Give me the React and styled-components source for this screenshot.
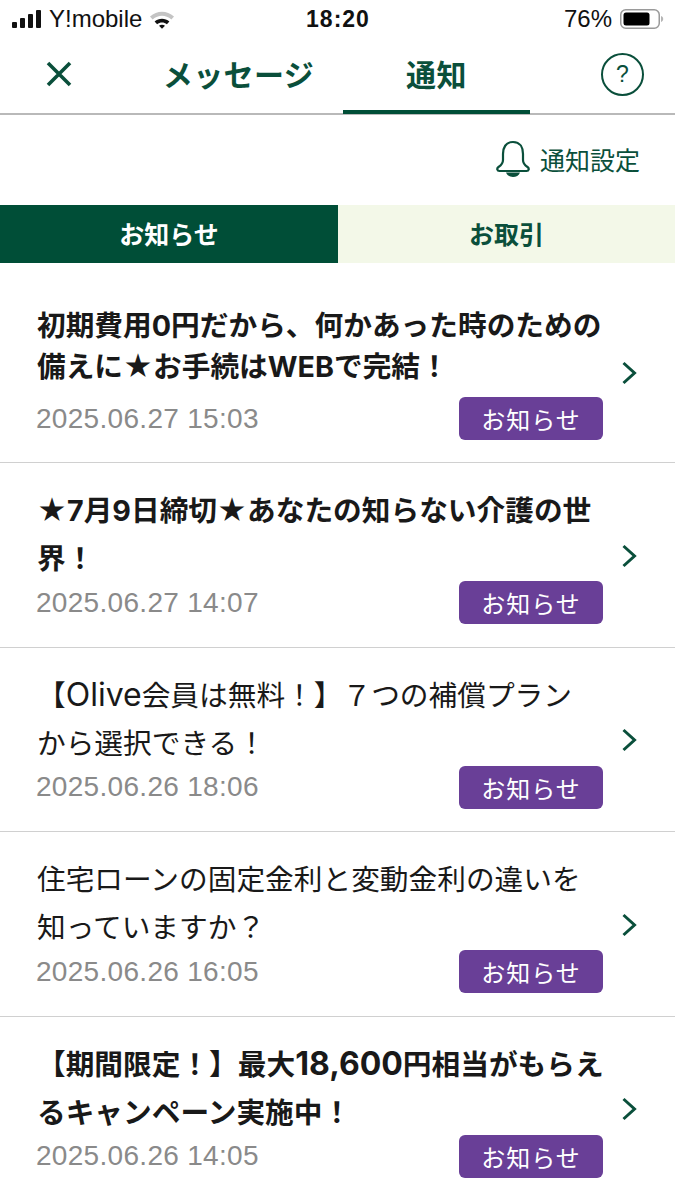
import styled, { createGlobalStyle } from "styled-components";

const green = "#0a4f3b";

const GlobalStyle = createGlobalStyle`
  html, body {
    margin: 0;
    padding: 0;
    background: #fff;
    overflow: hidden;
  }
  * { box-sizing: border-box; }
  body {
    font-family: "Liberation Sans", "Noto Sans CJK JP", sans-serif;
  }
`;

const Page = styled.div`
  width: 675px;
  height: 1200px;
  overflow: hidden;
`;

const StatusBar = styled.div`
  height: 38px;
  display: grid;
  grid-template-columns: 1fr auto 1fr;
  align-items: center;
  padding: 0 11px 0 12px;
  color: #111;
  font-size: 24px;
`;

const StatusLeft = styled.div`
  display: flex;
  align-items: center;
  gap: 7px;
`;

const StatusRight = styled.div`
  display: flex;
  align-items: center;
  justify-content: flex-end;
  gap: 8px;
  font-size: 24px;
`;

const Clock = styled.div`
  font-size: 23px;
  font-weight: 700;
  letter-spacing: 1px;
`;

const Nav = styled.div`
  height: 77px;
  display: flex;
  align-items: stretch;
  border-bottom: 2px solid #b9b9b9;
`;

const CloseButton = styled.div`
  width: 118px;
  display: flex;
  align-items: center;
  justify-content: center;
  padding-bottom: 3px;
  color: ${green};
`;

const NavTab = styled.div`
  width: 187px;
  margin-left: ${(p) => p.$offset}px;
  display: flex;
  align-items: center;
  justify-content: center;
  padding-bottom: 2px;
  color: ${green};
  font-size: 30px;
  font-weight: 700;
  letter-spacing: 0.4px;
  border-bottom: 4px solid ${(p) => (p.$active ? "#004e37" : "transparent")};
  margin-bottom: -1px;
`;

const HelpButton = styled.div`
  width: 43px;
  height: 43px;
  margin: 15px 31px 0 auto;
  border: 2px solid ${green};
  border-radius: 50%;
  display: flex;
  align-items: center;
  justify-content: center;
  color: ${green};
  font-size: 23px;
`;

const SettingsRow = styled.div`
  height: 90px;
  display: flex;
  align-items: center;
  justify-content: flex-end;
  gap: 9px;
  padding: 0 35px 3px 0;
  color: ${green};
  font-size: 25px;
`;

const Tabs = styled.div`
  height: 58px;
  display: grid;
  grid-template-columns: 338px 1fr;
`;

const Tab = styled.div`
  display: flex;
  align-items: center;
  justify-content: center;
  padding-bottom: 3px;
  font-size: 25px;
  font-weight: 700;
  background: ${(p) => (p.$active ? "#004e37" : "#f3f8e8")};
  color: ${(p) => (p.$active ? "#fff" : green)};
`;

const Item = styled.div`
  display: grid;
  grid-template-columns: minmax(0, 1fr) 72px;
  padding: ${(p) => (p.$first ? "42px 0 22px 37px" : "24px 0 22.5px 37px")};
  border-bottom: 1px solid #d0d0d0;
`;

const ItemBody = styled.div`
  display: flex;
  flex-direction: column;
`;

const Title = styled.div`
  font-family: Inter, "Noto Sans CJK JP", sans-serif;
  font-size: 28.7px;
  line-height: ${(p) => (p.$tight ? 41 : 48)}px;
  font-weight: ${(p) => (p.$unread ? 700 : 400)};
  color: #191919;
  white-space: pre;
`;

// latin runs sit larger than the kana around them
const Latin = styled.span`
  font-size: 32px;
  line-height: 1;
`;

const Meta = styled.div`
  display: flex;
  align-items: center;
  justify-content: space-between;
  margin-top: ${(p) => (p.$first ? 10 : -2)}px;
`;

const DateText = styled.div`
  font-size: 28px;
  color: #8a8a8a;
  letter-spacing: 0.3px;
  margin-left: -1px;
`;

const Badge = styled.div`
  width: 144px;
  height: 43px;
  border-radius: 6px;
  background: #693f97;
  color: #fff;
  font-size: 24px;
  letter-spacing: 1px;
  display: flex;
  align-items: center;
  justify-content: center;
`;

const Chevron = styled.div`
  display: flex;
  align-items: center;
  justify-content: flex-start;
  padding-left: 18px;
  color: ${green};
`;

const items = [
  {
    title: "初期費用0円だから、何かあった時のための\n備えに★お手続はWEBで完結！",
    date: "2025.06.27 15:03",
    unread: true,
    first: true,
  },
  {
    title: "★7月9日締切★あなたの知らない介護の世\n界！",
    date: "2025.06.27 14:07",
    unread: true,
  },
  {
    title: (
      <>
        【<Latin>Olive</Latin>会員は無料！】７つの補償プラン{"\n"}から選択できる！
      </>
    ),
    date: "2025.06.26 18:06",
  },
  {
    title: "住宅ローンの固定金利と変動金利の違いを\n知っていますか？",
    date: "2025.06.26 16:05",
  },
  {
    title: (
      <>
        【期間限定！】最大<Latin>18,600</Latin>円相当がもらえ{"\n"}るキャンペーン実施中！
      </>
    ),
    date: "2025.06.26 14:05",
    unread: true,
  },
];

function Signal() {
  return (
    <svg width="30" height="20" viewBox="0 0 30 20" fill="#111">
      <rect x="0" y="13" width="5" height="6" rx="1" />
      <rect x="8" y="9" width="5" height="10" rx="1" />
      <rect x="16" y="5" width="5" height="14" rx="1" />
      <rect x="24" y="1" width="5" height="18" rx="1" />
    </svg>
  );
}

function Wifi() {
  return (
    <svg width="26" height="20" viewBox="0 0 26 20">
      <path d="M1 7.5C8 1 18 1 25 7.5L22.4 10.4C16.5 5.4 9.5 5.4 3.6 10.4Z" fill="#c4c4c4" />
      <path d="M5.6 12.6C10 8.8 16 8.8 20.4 12.6L17.9 15.2C14.9 12.8 11.1 12.8 8.1 15.2Z" fill="#111" />
      <path d="M10 16.7C11.8 15.3 14.2 15.3 16 16.7L13 19.8Z" fill="#111" />
    </svg>
  );
}

function Battery() {
  return (
    <svg width="44" height="22" viewBox="0 0 44 22">
      <rect x="0.75" y="1.75" width="38.5" height="18.5" rx="5" fill="none" stroke="#9a9a9a" strokeWidth="1.5" />
      <rect x="3.5" y="4.5" width="26" height="13" rx="2.5" fill="#000" />
      <path d="M41 8v6c1.4-.4 2.2-1.6 2.2-3s-.8-2.6-2.2-3z" fill="#b5b5b5" />
    </svg>
  );
}

function Bell() {
  return (
    <svg width="36" height="38" viewBox="0 0 36 38" fill="none" stroke={green} strokeWidth="2.2">
      <path d="M18 2C10.5 2 8 8 8 14v6c0 3-1.5 5-4.5 7-2 1.4-1.5 4 1 4h27c2.5 0 3-2.6 1-4-3-2-4.5-4-4.5-7v-6c0-6-2.5-12-10-12z" />
      <path d="M11 32.5c1 3 4 4.5 7 4.5s6-1.5 7-4.5z" fill={green} stroke="none" />
    </svg>
  );
}

function ChevronIcon() {
  return (
    <svg width="16" height="24" viewBox="0 0 16 24" fill="none" stroke="currentColor" strokeWidth="3">
      <path d="M2.5 2l11 10-11 10" />
    </svg>
  );
}

export default function App() {
  return (
    <Page>
      <GlobalStyle />
      <StatusBar>
        <StatusLeft>
          <Signal />
          <span>Y!mobile</span>
          <Wifi />
        </StatusLeft>
        <Clock>18:20</Clock>
        <StatusRight>
          <span>76%</span>
          <Battery />
        </StatusRight>
      </StatusBar>
      <Nav>
        <CloseButton>
          <svg width="28" height="28" viewBox="0 0 28 28" stroke="currentColor" strokeWidth="3.6" fill="none">
            <path d="M3 3l22 22M25 3L3 25" />
          </svg>
        </CloseButton>
        <NavTab $offset={27}>メッセージ</NavTab>
        <NavTab $offset={11} $active>
          通知
        </NavTab>
        <HelpButton>?</HelpButton>
      </Nav>
      <SettingsRow>
        <Bell />
        <span>通知設定</span>
      </SettingsRow>
      <Tabs>
        <Tab $active>お知らせ</Tab>
        <Tab>お取引</Tab>
      </Tabs>
      {items.map((item) => (
        <Item key={item.date} $first={item.first}>
          <ItemBody>
            <Title $unread={item.unread} $tight={item.first}>
              {item.title}
            </Title>
            <Meta $first={item.first}>
              <DateText>{item.date}</DateText>
              <Badge>お知らせ</Badge>
            </Meta>
          </ItemBody>
          <Chevron>
            <ChevronIcon />
          </Chevron>
        </Item>
      ))}
    </Page>
  );
}
